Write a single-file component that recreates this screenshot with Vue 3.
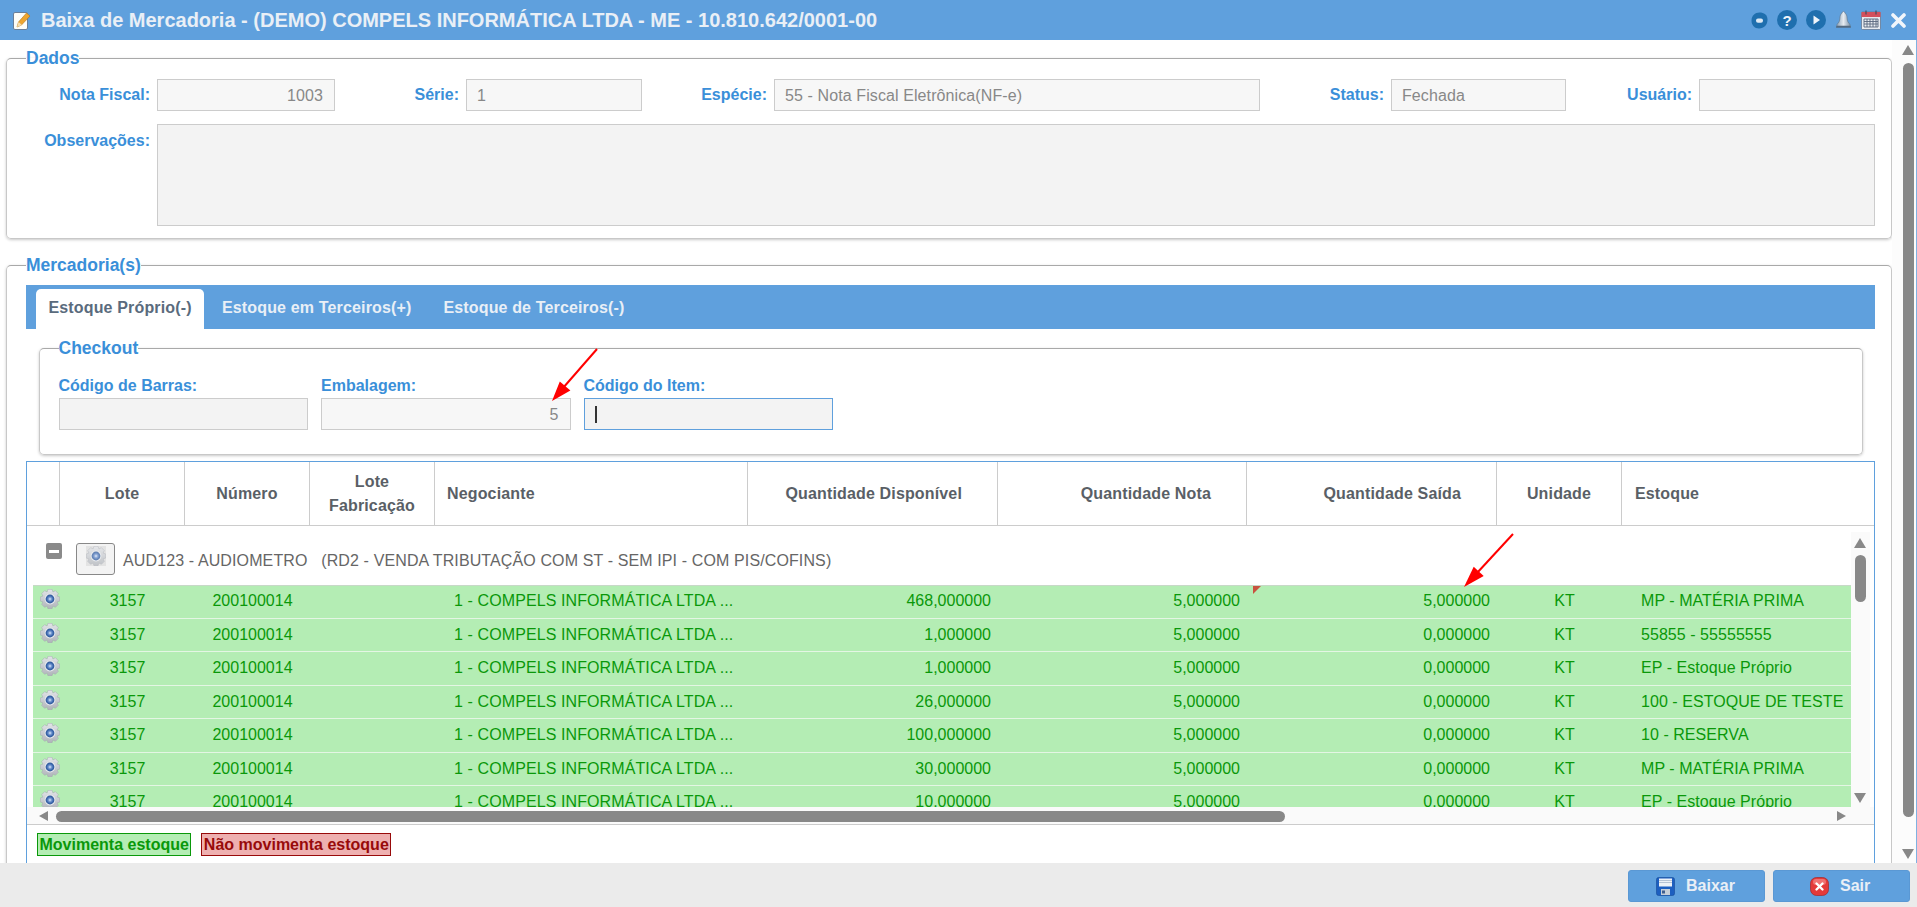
<script setup>
const company = '1 - COMPELS INFORMÁTICA LTDA ...'
const rows = [
  { disp: '468,000000', saida: '5,000000', est: 'MP - MATÉRIA PRIMA', flag: true },
  { disp: '1,000000', saida: '0,000000', est: '55855 - 55555555' },
  { disp: '1,000000', saida: '0,000000', est: 'EP - Estoque Próprio' },
  { disp: '26,000000', saida: '0,000000', est: '100 - ESTOQUE DE TESTE' },
  { disp: '100,000000', saida: '0,000000', est: '10 - RESERVA' },
  { disp: '30,000000', saida: '0,000000', est: 'MP - MATÉRIA PRIMA' },
  { disp: '10,000000', saida: '0,000000', est: 'EP - Estoque Próprio' }
]
const gearPath = (() => {
  const cx = 10, cy = 10, teeth = 8, pts = []
  for (let i = 0; i < teeth; i++) {
    const a = (i / teeth) * Math.PI * 2
    const s = (Math.PI * 2) / teeth
    for (const [r, o] of [[7.6, -0.5], [9.9, -0.27], [9.9, 0.27], [7.6, 0.5]]) {
      const t = a + o * s
      pts.push((cx + r * Math.cos(t)).toFixed(2) + ' ' + (cy + r * Math.sin(t)).toFixed(2))
    }
  }
  return 'M' + pts.join('L') + 'Z'
})()
</script>

<template>
  <div class="app">
    <svg class="defs" aria-hidden="true">
      <defs>
        <radialGradient id="gearCore" cx="50%" cy="50%" r="55%">
          <stop offset="0" stop-color="#e6eefa" />
          <stop offset="0.3" stop-color="#7ea0d6" />
          <stop offset="0.65" stop-color="#3a66ad" />
          <stop offset="1" stop-color="#2f568f" />
        </radialGradient>
        <linearGradient id="gearBody" x1="0" y1="0" x2="0" y2="1">
          <stop offset="0" stop-color="#e2e4e8" />
          <stop offset="1" stop-color="#b0b4ba" />
        </linearGradient>
        <linearGradient id="bellBody" x1="0" y1="0" x2="1" y2="0">
          <stop offset="0" stop-color="#8fa6bb" />
          <stop offset="0.5" stop-color="#e6ebf0" />
          <stop offset="1" stop-color="#8298ad" />
        </linearGradient>
        <symbol id="gear" viewBox="0 0 20 20">
          <path :d="gearPath" fill="url(#gearBody)" stroke="#a2a6ae" stroke-width="0.5" />
          <circle cx="10" cy="10" r="5.400" fill="#e9ebef" />
          <circle cx="10" cy="10" r="4.400" fill="url(#gearCore)" />
        </symbol>
      </defs>
    </svg>

    <header class="titlebar">
      <svg class="title-icon" viewBox="0 0 18 19">
        <rect x="0.5" y="1.5" width="14" height="17" rx="1.5" fill="#fdfdf8" stroke="#6a7f98" />
        <path d="M4 16l1.500-5 8-9 3.500 3-8.500 9z" fill="#eda52f" stroke="#b5751a" stroke-width="0.6" />
        <path d="M4 16l1.500-5 3.500 3z" fill="#f5deb0" />
      </svg>
      <h1 class="title">Baixa de Mercadoria - (DEMO) COMPELS INFORMÁTICA LTDA - ME - 10.810.642/0001-00</h1>
      <div class="title-tools">
        <svg class="ti w17" viewBox="0 0 17 17"><path d="M8.5 0.5C13 0.5 16.5 3 16.5 7.5 16.5 13 13 16.5 8 16.5 3.5 16.5 0.5 13 0.5 8.5 0.5 3.5 4 0.5 8.5 0.5Z" fill="#1f6fae" /><rect x="5" y="6.5" width="7" height="4.2" rx="2" fill="#dfeaf4" /></svg>
        <svg class="ti w20" viewBox="0 0 20 20"><circle cx="10" cy="10" r="10" fill="#1f6fae" /><text x="10" y="15.5" text-anchor="middle" class="qmark">?</text></svg>
        <svg class="ti w20" viewBox="0 0 20 20"><circle cx="10" cy="10" r="10" fill="#1f6fae" /><path d="M7.5 5.5l6.5 4.5-6.5 4.5z" fill="#eef4fa" /></svg>
        <svg class="ti w17 bell" viewBox="0 0 17 18"><path d="M8.5 0.5c1 0 1.4.8 1.4 1.6 1.6.8 2 2.6 2.2 5 .2 3 1 4.800 3 6.400v1.500H1.900v-1.500c2-1.600 2.800-3.400 3-6.400.2-2.400.6-4.200 2.200-5 0-.8.400-1.600 1.400-1.600z" fill="url(#bellBody)" stroke="#5f7488" stroke-width="0.6" /><rect x="1" y="15" width="15" height="1.800" rx=".9" fill="#536a80" /></svg>
        <svg class="ti w20" viewBox="0 0 20 20"><rect x="0.5" y="2" width="19" height="17.500" rx="1" fill="#e8ebf0" stroke="#5f6f88" stroke-width="0.7" /><rect x="0.500" y="2" width="19" height="5" fill="#d4505c" /><path d="M5 0.500v4M15 0.500v4" stroke="#444c5c" stroke-width="1.200" /><path d="M3 9h14v8H3z M3 11.500h14M3 14h14M6 9v8M9 9v8M12 9v8M15 9v8" fill="none" stroke="#59667e" stroke-width="0.900" /></svg>
        <svg class="ti w15" viewBox="0 0 15 15"><path d="M2 2l11 11M13 2L2 13" stroke="#f2f6fb" stroke-width="3.600" stroke-linecap="round" /></svg>
      </div>
    </header>

    <div class="middle">
      <main class="content">
        <fieldset class="box dados">
          <legend>Dados</legend>
          <div class="dados-grid">
            <label class="lbl">Nota Fiscal:</label>
            <div class="field right">1003</div>
            <label class="lbl">Série:</label>
            <div class="field">1</div>
            <label class="lbl">Espécie:</label>
            <div class="field">55 - Nota Fiscal Eletrônica(NF-e)</div>
            <label class="lbl">Status:</label>
            <div class="field">Fechada</div>
            <label class="lbl">Usuário:</label>
            <div class="field"></div>
            <label class="lbl top">Observações:</label>
            <div class="field area"></div>
          </div>
        </fieldset>

        <fieldset class="box merc">
          <legend>Mercadoria(s)</legend>
          <div class="merc-inner">
            <nav class="tabs">
              <a class="tab active">Estoque Próprio(-)</a>
              <a class="tab">Estoque em Terceiros(+)</a>
              <a class="tab">Estoque de Terceiros(-)</a>
            </nav>

            <fieldset class="box checkout">
              <legend>Checkout</legend>
              <div class="checkout-grid">
                <div class="cell">
                  <label class="lbl2">Código de Barras:</label>
                  <div class="field dark"></div>
                </div>
                <div class="cell">
                  <label class="lbl2">Embalagem:</label>
                  <div class="field right">5</div>
                </div>
                <div class="cell">
                  <label class="lbl2">Código do Item:</label>
                  <div class="field dark focus"><span class="caret"></span></div>
                </div>
              </div>
            </fieldset>

            <section class="grid">
              <div class="ghead">
                <div class="hc"></div>
                <div class="hc center">Lote</div>
                <div class="hc center">Número</div>
                <div class="hc center">Lote<br />Fabricação</div>
                <div class="hc left">Negociante</div>
                <div class="hc end">Quantidade Disponível</div>
                <div class="hc end">Quantidade Nota</div>
                <div class="hc end">Quantidade Saída</div>
                <div class="hc center">Unidade</div>
                <div class="hc left last">Estoque</div>
              </div>

              <div class="gbody">
                <div class="gscroll">
                  <div class="group">
                    <span class="minus"><span class="minus-bar"></span></span>
                    <button class="gear-btn" type="button"><svg class="gear-soft"><use href="#gear" /></svg></button>
                    <span class="group-text">AUD123 - AUDIOMETRO &nbsp;&nbsp;(RD2 - VENDA TRIBUTAÇÃO COM ST - SEM IPI - COM PIS/COFINS)</span>
                  </div>
                  <div v-for="(r, i) in rows" :key="i" class="row">
                    <div class="c gearc"><svg class="gear"><use href="#gear" /></svg></div>
                    <div class="c center">3157</div>
                    <div class="c center">200100014</div>
                    <div class="c"></div>
                    <div class="c neg">{{ company }}</div>
                    <div class="c end">{{ r.disp }}</div>
                    <div class="c end">5,000000</div>
                    <div class="c end flagcell"><span v-if="r.flag" class="flag"></span>{{ r.saida }}</div>
                    <div class="c center">KT</div>
                    <div class="c est">{{ r.est }}</div>
                  </div>
                </div>
                <div class="vbar">
                  <span class="tri up"></span>
                  <span class="vthumb"></span>
                  <span class="tri down pushdown"></span>
                </div>
              </div>

              <div class="hbar">
                <span class="tri lft"></span>
                <span class="hthumb"></span>
                <span class="tri rgt"></span>
              </div>

              <div class="legend-row">
                <span class="tag ok">Movimenta estoque</span>
                <span class="tag no">Não movimenta estoque</span>
              </div>
            </section>
          </div>
        </fieldset>
      </main>

      <aside class="pagebar">
        <span class="tri up"></span>
        <span class="pthumb"></span>
        <span class="tri down pdown"></span>
      </aside>
    </div>

    <footer class="footer">
      <button class="btn" type="button">
        <svg class="btn-icon" viewBox="0 0 19 19">
          <rect x="0.500" y="0.500" width="18" height="18" rx="2" fill="#1d5fc0" stroke="#154a99" stroke-width="0.600" />
          <rect x="3" y="1.500" width="13" height="8" fill="#eef2f7" />
          <path d="M3 3.500h13M3 5.500h13" stroke="#a8b8cc" stroke-width="0.800" />
          <rect x="5" y="12" width="9" height="6" fill="#c6ced8" />
          <rect x="6" y="13.500" width="3" height="3" fill="#3f5f8f" />
        </svg>
        <span>Baixar</span>
      </button>
      <button class="btn sair" type="button">
        <svg class="btn-icon" viewBox="0 0 19 19">
          <rect x="0.500" y="0.500" width="18" height="18" rx="6" fill="#e43a3a" stroke="#a82626" stroke-width="0.700" />
          <rect x="3" y="2" width="13" height="6" rx="3" fill="#f58a8a" opacity="0.700" />
          <path d="M6.500 6.500l6 6M12.500 6.500l-6 6" stroke="#fff" stroke-width="2.400" stroke-linecap="round" />
        </svg>
        <span>Sair</span>
      </button>
    </footer>

    <svg class="annot" viewBox="0 0 1917 907">
      <path d="M597 349L563 388" stroke="#f00" stroke-width="2" />
      <path d="M552 401L559.800 381.400L570.400 390.600Z" fill="#f00" />
      <path d="M1513 534L1477 573" stroke="#f00" stroke-width="2" />
      <path d="M1464 587L1473.700 566.700L1483.700 576Z" fill="#f00" />
    </svg>
  </div>
</template>

<style>
html, body { margin: 0; padding: 0; overflow: hidden; background: #fff; }
</style>

<style scoped>
.app {
  position: relative;
  width: 1917px;
  height: 907px;
  display: flex;
  flex-direction: column;
  overflow: hidden;
  background: #fff;
  font-family: "Liberation Sans", Arial, sans-serif;
  font-size: 16px;
  color: #666;
}
.defs { position: absolute; width: 0; height: 0; }
.titlebar {
  flex: 0 0 40px;
  height: 40px;
  display: flex;
  align-items: center;
  padding: 0 11px 0 13px;
  background: #5fa0dd;
  box-sizing: border-box;
}
.title-icon { width: 18px; height: 19px; margin-right: 10px; }
.title {
  margin: 0;
  font-size: 20px;
  font-weight: 700;
  color: #e9eff6;
  white-space: nowrap;
}
.title-tools { margin-left: auto; display: flex; align-items: center; gap: 9px; }
.ti { display: block; }
.w17 { width: 17px; height: 17px; }
.w20 { width: 20px; height: 20px; }
.w15 { width: 15px; height: 15px; margin-left: 1px; }
.bell { height: 18px; }
.qmark { font: 700 15px "Liberation Sans", Arial, sans-serif; fill: #eef4fa; }

.middle { flex: 1 1 0; min-height: 0; display: flex; }
.content { width: 1892px; flex: 0 0 1892px; overflow: hidden; padding-top: 8px; box-sizing: border-box; }

.box {
  margin: 0;
  padding: 0;
  min-width: 0;
  border: 1px solid #c8c8c8;
  border-top-color: #a9a9a9;
  border-radius: 5px;
  box-shadow: 0 1px 3px rgba(0, 0, 0, 0.22);
  background: #fff;
}
.box > legend {
  margin-left: 19px;
  padding: 0;
  font-size: 17.500px;
  font-weight: 700;
  line-height: 20px;
  color: #3a8fd9;
}
.dados { margin-left: 6px; }
.dados-grid {
  display: grid;
  grid-template-columns: 150px 178px 131px 176px 132px 486px 131px 175px 133px 176px;
  row-gap: 13px;
  padding: 11px 16px 12px 0;
  height: 147px;
  box-sizing: content-box;
  grid-template-rows: 32px 102px;
}
.lbl {
  text-align: right;
  padding-right: 7px;
  font-size: 16px;
  font-weight: 700;
  color: #3a8fd9;
  line-height: 32px;
  white-space: nowrap;
}
.lbl.top { line-height: 34px; }
.field {
  height: 32px;
  box-sizing: border-box;
  border: 1px solid #ccc;
  background: #f7f7f7;
  color: #888;
  line-height: 31px;
  padding: 0 11px 0 10px;
  letter-spacing: 0.1px;
  white-space: nowrap;
  overflow: hidden;
}
.field.right { text-align: right; }
.field.area { grid-column: 2 / 11; height: 102px; background: #f3f3f3; }
.field.dark { background: #f3f3f3; }
.field.focus { border-color: #5fa0dd; display: flex; align-items: center; padding-left: 10px; }
.caret { display: block; width: 2px; height: 17px; background: #333; }

.merc { margin: 16px 0 0 6px; height: 640px; }
.merc-inner { padding: 10px 16px 0 19px; }
.tabs {
  height: 44px;
  display: flex;
  align-items: flex-end;
  padding-left: 10px;
  background: #5fa0dd;
  font-size: 16px;
  font-weight: 700;
  letter-spacing: 0.15px;
}
.tab {
  height: 40px;
  line-height: 38px;
  padding: 0 16px;
  color: #e9eff6;
  white-space: nowrap;
}
.tab.active {
  width: 168px;
  box-sizing: border-box;
  padding: 0 0 0 12.500px;
  margin-right: 2px;
  background: #fff;
  color: #5a6b7d;
  border-radius: 5px 5px 0 0;
}

.checkout { margin: 9px 12px 0 13px; }
.checkout > legend { margin-left: 18.500px; }
.checkout-grid {
  display: grid;
  grid-template-columns: 249.500px 249.500px 249.500px;
  column-gap: 13px;
  padding: 18px 18px 24px 18.500px;
}
.lbl2 {
  display: block;
  font-size: 16px;
  font-weight: 700;
  color: #3a8fd9;
  line-height: 20px;
  margin-bottom: 2px;
  white-space: nowrap;
}

.grid {
  margin-top: 6px;
  border: 1px solid #5fa0dd;
  border-bottom: 0;
  height: 420px;
  box-sizing: border-box;
}
.ghead {
  height: 64px;
  display: grid;
  grid-template-columns: 33px 125px 125px 125px 313px 250px 249px 250px 125px 1fr;
  border-bottom: 1px solid #ccc;
  box-sizing: border-box;
  font-size: 16px;
  font-weight: 700;
  letter-spacing: 0.15px;
  color: #5a5f66;
  line-height: 24px;
}
.hc {
  border-right: 1px solid #ccc;
  display: flex;
  align-items: center;
  box-sizing: border-box;
  white-space: nowrap;
}
.hc.center { justify-content: center; text-align: center; }
.hc.left { padding-left: 12px; }
.hc.end { justify-content: flex-end; padding-right: 35px; }
.hc.last { border-right: 0; padding-left: 13px; }

.gbody { display: flex; height: 281px; }
.gscroll { width: 1818px; margin-left: 6px; overflow: hidden; flex: 0 0 1818px; }
.group {
  height: 59px;
  box-sizing: border-box;
  padding: 17px 0 0 13px;
  display: flex;
  align-items: flex-start;
}
.minus {
  width: 16px;
  height: 16px;
  margin-right: 14px;
  background: #8a8a8a;
  border-radius: 2px;
  display: flex;
  align-items: center;
  justify-content: center;
}
.minus-bar { width: 10px; height: 3px; background: #fff; }
.gear-btn {
  width: 39px;
  height: 32px;
  padding: 2px 0 0;
  margin: 0 8px 0 0;
  background: #f3f3f3;
  border: 1px solid #888;
  border-radius: 3px;
  box-sizing: border-box;
  display: flex;
  justify-content: center;
  align-items: flex-start;
}
.gear-soft { width: 20px; height: 20px; opacity: 0.75; background: #dedede; }
.group-text { line-height: 36px; white-space: pre; color: #666; letter-spacing: 0.12px; }
.row {
  height: 33.500px;
  box-sizing: border-box;
  display: grid;
  grid-template-columns: 32px 125px 125px 125px 313px 250px 249px 250px 125px 1fr;
  background: #b4edb4;
  border-bottom: 1px solid #e4f6e4;
  color: #0a980a;
  line-height: 31px;
}
.row:nth-child(2) { box-shadow: inset 0 1px 0 #c8d8c8; }
.c { white-space: nowrap; overflow: hidden; min-width: 0; }
.c.center { text-align: center; }
.c.end { text-align: right; padding-right: 12px; }
.c.neg { padding: 0 0 0 14px; letter-spacing: 0.1px; }
.c.est { padding-left: 14px; letter-spacing: 0.05px; }
.gearc { padding: 4px 0 0 7px; box-sizing: border-box; }
.gear { display: block; width: 20px; height: 20px; }
.flagcell { position: relative; }
.flag {
  position: absolute;
  left: 1px;
  top: 1px;
  width: 0;
  height: 0;
  border-top: 8px solid #c8523f;
  border-right: 8px solid transparent;
}

.tri { display: block; width: 0; height: 0; flex: none; }
.tri.up { border: 6.500px solid transparent; border-top: 0; border-bottom: 10px solid #888; }
.tri.down { border: 6.500px solid transparent; border-bottom: 0; border-top: 10px solid #888; }
.tri.lft { border: 5.500px solid transparent; border-left: 0; border-right: 9px solid #888; }
.tri.rgt { border: 5.500px solid transparent; border-right: 0; border-left: 9px solid #888; }

.vbar {
  width: 19px;
  margin-top: 6px;
  padding: 6px 0 0 3px;
  background: #fafafa;
  box-sizing: border-box;
  display: flex;
  flex-direction: column;
}
.vthumb {
  display: block;
  width: 11px;
  height: 47px;
  margin: 7px 0 0 1px;
  border-radius: 5.500px;
  background: #888;
}
.pushdown { margin-top: 191px; }
.hbar {
  height: 17px;
  box-sizing: border-box;
  padding: 4px 28px 0 12px;
  background: #fafafa;
  display: flex;
  align-items: flex-start;
}
.hthumb {
  display: block;
  width: 1229px;
  height: 11px;
  margin-left: 8px;
  border-radius: 5.500px;
  background: #888;
}
.tri.rgt { margin-left: auto; }
.legend-row {
  border-top: 1px solid #ccc;
  padding: 8px 0 0 10px;
  display: flex;
  gap: 10px;
  font-weight: 700;
  font-size: 16px;
}
.tag {
  height: 23px;
  box-sizing: border-box;
  line-height: 21px;
  padding: 0 1.500px;
  border: 1px solid;
  white-space: nowrap;
}
.tag.ok { background: #b4edb4; border-color: #0a980a; color: #0a980a; }
.tag.no { background: #eeb0b0; border-color: #980a0a; color: #980a0a; }

.pagebar {
  flex: 1;
  border-right: 1px solid #7fb2e2;
  background: #fcfcfc;
  padding: 5px 0 0 10px;
  display: flex;
  flex-direction: column;
  box-sizing: border-box;
}
.pthumb {
  display: block;
  width: 11px;
  height: 754px;
  margin: 8px 0 0 1px;
  border-radius: 5.500px;
  background: #888;
}
.pdown { margin-top: 32px; }

.footer {
  flex: 0 0 44px;
  height: 44px;
  box-sizing: border-box;
  background: #ebebeb;
  display: flex;
  justify-content: flex-end;
  gap: 8px;
  padding: 7px 7px 0 0;
}
.btn {
  width: 137px;
  height: 32px;
  box-sizing: border-box;
  margin: 0;
  padding: 0 0 0 27px;
  background: #5fa0dd;
  border: 1px solid #5a98d4;
  border-radius: 3px;
  display: flex;
  align-items: center;
  font-family: inherit;
  font-size: 16px;
  font-weight: 700;
  color: #e9eff6;
}
.btn.sair { padding-left: 36px; }
.btn-icon { width: 19px; height: 19px; margin-right: 11px; display: block; }
.annot { position: absolute; inset: 0; width: 1917px; height: 907px; pointer-events: none; }
</style>
